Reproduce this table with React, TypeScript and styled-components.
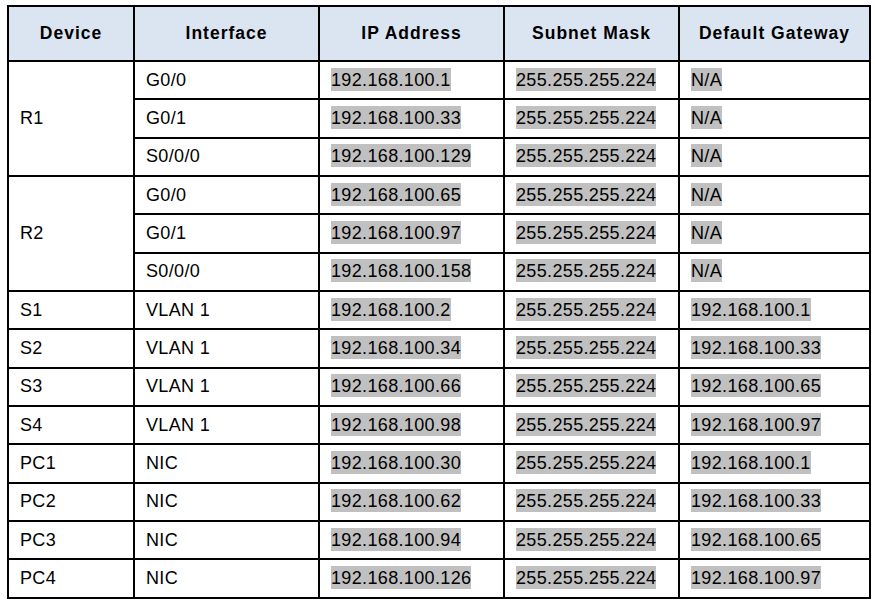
import React from 'react';
import styled, { createGlobalStyle } from 'styled-components';

type Row = {
  device: string;
  iface: string;
  ip: string;
  mask: string;
  gateway: string;
};

type Group = { device: string; rows: Omit<Row, 'device'>[] };

const MASK = '255.255.255.224';

const groups: Group[] = [
  {
    device: 'R1',
    rows: [
      { iface: 'G0/0', ip: '192.168.100.1', mask: MASK, gateway: 'N/A' },
      { iface: 'G0/1', ip: '192.168.100.33', mask: MASK, gateway: 'N/A' },
      { iface: 'S0/0/0', ip: '192.168.100.129', mask: MASK, gateway: 'N/A' },
    ],
  },
  {
    device: 'R2',
    rows: [
      { iface: 'G0/0', ip: '192.168.100.65', mask: MASK, gateway: 'N/A' },
      { iface: 'G0/1', ip: '192.168.100.97', mask: MASK, gateway: 'N/A' },
      { iface: 'S0/0/0', ip: '192.168.100.158', mask: MASK, gateway: 'N/A' },
    ],
  },
  { device: 'S1', rows: [{ iface: 'VLAN 1', ip: '192.168.100.2', mask: MASK, gateway: '192.168.100.1' }] },
  { device: 'S2', rows: [{ iface: 'VLAN 1', ip: '192.168.100.34', mask: MASK, gateway: '192.168.100.33' }] },
  { device: 'S3', rows: [{ iface: 'VLAN 1', ip: '192.168.100.66', mask: MASK, gateway: '192.168.100.65' }] },
  { device: 'S4', rows: [{ iface: 'VLAN 1', ip: '192.168.100.98', mask: MASK, gateway: '192.168.100.97' }] },
  { device: 'PC1', rows: [{ iface: 'NIC', ip: '192.168.100.30', mask: MASK, gateway: '192.168.100.1' }] },
  { device: 'PC2', rows: [{ iface: 'NIC', ip: '192.168.100.62', mask: MASK, gateway: '192.168.100.33' }] },
  { device: 'PC3', rows: [{ iface: 'NIC', ip: '192.168.100.94', mask: MASK, gateway: '192.168.100.65' }] },
  { device: 'PC4', rows: [{ iface: 'NIC', ip: '192.168.100.126', mask: MASK, gateway: '192.168.100.97' }] },
];

const headers = [
  { label: 'Device', width: 126 },
  { label: 'Interface', width: 185 },
  { label: 'IP Address', width: 185 },
  { label: 'Subnet Mask', width: 175 },
  { label: 'Default Gateway', width: 191 },
];

const GlobalStyle = createGlobalStyle`
  html, body {
    margin: 0;
    background: #fff;
  }
  body {
    font-family: "Liberation Sans", Arial, sans-serif;
    color: #000;
  }
`;

const Page = styled.div`
  padding: 5px 0 0 7px;
`;

const AddressTable = styled.table`
  border-collapse: collapse;
  table-layout: fixed;
  width: 862px;
  border: 2px solid #000;
`;

const HeadRow = styled.tr`
  height: 55px;
  background: #dbe5f1;
`;

const HeadCell = styled.th`
  border: 2px solid #000;
  font-size: 17.5px;
  font-weight: bold;
  letter-spacing: 1px;
  text-align: center;
  vertical-align: middle;
  padding: 0 4px;
`;

const BodyRow = styled.tr`
  height: 38.35px;
`;

const Cell = styled.td`
  border: 2px solid #000;
  font-size: 18px;
  letter-spacing: 0.35px;
  padding: 0 0 0 11px;
  vertical-align: middle;
  white-space: nowrap;
`;

const Highlight = styled.span`
  background: #c0c0c0;
  padding: 2px 0 1px;
`;

export default function App() {
  return (
    <Page>
      <GlobalStyle />
      <AddressTable>
        <colgroup>
          {headers.map(h => (
            <col key={h.label} style={{ width: h.width }} />
          ))}
        </colgroup>
        <thead>
          <HeadRow>
            {headers.map(h => (
              <HeadCell key={h.label}>{h.label}</HeadCell>
            ))}
          </HeadRow>
        </thead>
        <tbody>
          {groups.map(group =>
            group.rows.map((row, i) => (
              <BodyRow key={group.device + row.iface}>
                {i === 0 && <Cell rowSpan={group.rows.length}>{group.device}</Cell>}
                <Cell>{row.iface}</Cell>
                <Cell><Highlight>{row.ip}</Highlight></Cell>
                <Cell><Highlight>{row.mask}</Highlight></Cell>
                <Cell><Highlight>{row.gateway}</Highlight></Cell>
              </BodyRow>
            ))
          )}
        </tbody>
      </AddressTable>
    </Page>
  );
}
